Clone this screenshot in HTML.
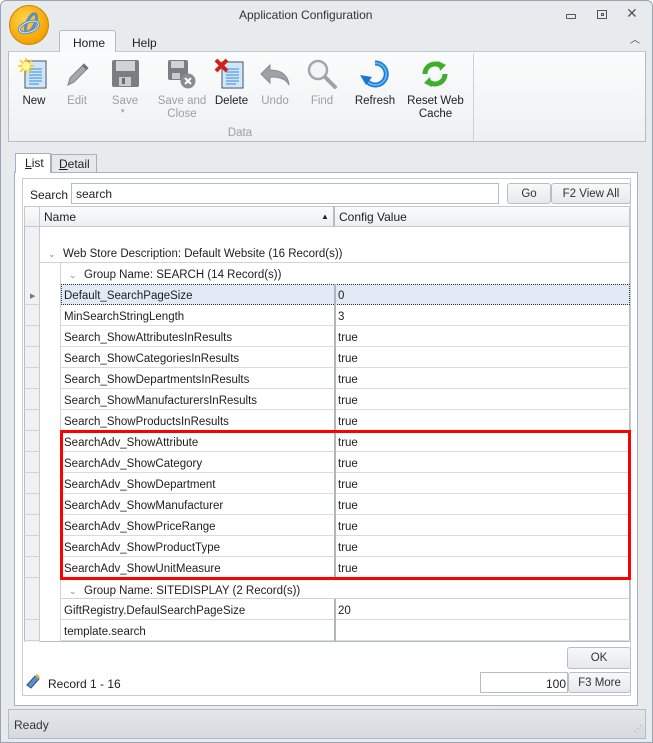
<!DOCTYPE html>
<html><head><style>
*{box-sizing:border-box;margin:0;padding:0}
body{width:653px;height:743px;background:#fff;font-family:"Liberation Sans",sans-serif;font-size:12px;color:#1e1e1e;position:relative;overflow:hidden}
.a{position:absolute}
.t{position:absolute;white-space:nowrap;line-height:14px}
.lbl{position:absolute;text-align:center;line-height:13px;font-size:11.5px;white-space:nowrap}
.dis{color:#9aa0a8}
.nm{position:absolute;left:24px;top:5px;font-size:11.5px;line-height:14px;white-space:nowrap}
.vl{position:absolute;left:298px;top:5px;font-size:11.5px;line-height:14px}
.btn{position:absolute;border:1px solid #b9bec6;border-radius:3px;background:linear-gradient(#f7f8f9,#e6e9ec);text-align:center;font-size:11.5px;line-height:19px;color:#333}
</style></head><body>
<div class="a" style="left:0;top:0;width:653px;height:743px;background:#e8ebee;border:1px solid #9ba3ad;border-radius:6px 6px 0 0"></div>
<div class="a" style="left:9px;top:5px;width:40px;height:40px;border-radius:50%;background:radial-gradient(circle at 40% 35%,#ffd44a,#f5a300 70%,#d88300);border:1px solid #c98300"></div>
<svg class="a" style="left:9px;top:5px" width="40" height="40" viewBox="0 0 40 40"><g fill="none" stroke="#5e8fc0" stroke-width="3"><ellipse cx="20" cy="22" rx="10" ry="5" transform="rotate(-20 20 22)"/><ellipse cx="22" cy="18" rx="4" ry="10" transform="rotate(25 22 18)"/></g><g fill="none" stroke="#dbe8f5" stroke-width="1"><ellipse cx="20" cy="22" rx="10" ry="5" transform="rotate(-20 20 22)"/></g></svg>
<div class="t" style="left:239px;top:8px;font-size:12px;color:#333">Application Configuration</div>
<div class="a" style="left:566px;top:14px;width:10px;height:5px;border:1px solid #555;border-radius:1px"></div>
<div class="a" style="left:597px;top:10px;width:10px;height:9px;border:1px solid #555"></div>
<div class="a" style="left:601px;top:13px;width:3px;height:3px;border:1px solid #555"></div>
<div class="t" style="left:626px;top:6px;font-size:14px;color:#555">✕</div>
<div class="t" style="left:630px;top:34px;font-size:10px;color:#444">︿</div>
<div class="a" style="left:59px;top:30px;width:57px;height:22px;background:#f8f9fa;border:1px solid #b5bcc5;border-bottom:none;border-radius:3px 3px 0 0"></div>
<div class="t" style="left:73px;top:36px">Home</div>
<div class="t" style="left:132px;top:36px">Help</div>
<div class="a" style="left:8px;top:51px;width:638px;height:91px;background:linear-gradient(#fbfcfc,#eef0f2);border:1px solid #b5bcc5;border-top-color:#c3c9d0"></div>
<div class="a" style="left:60px;top:51px;width:55px;height:2px;background:#f8f9fa"></div>
<div class="a" style="left:473px;top:53px;width:1px;height:88px;background:#cdd2d8"></div>
<svg class="a" style="left:18px;top:58px" width="32" height="32" viewBox="0 0 32 32"><rect x="7" y="3" width="21" height="27" fill="#e8f3ff" stroke="#3a4f66"/><rect x="8" y="4" width="19" height="25" fill="#cfe6fa"/><g stroke="#3b8ad6"><path d="M11 11h13M11 14h13M11 17h13M11 20h13M11 23h13M11 26h10"/></g><circle cx="8" cy="8" r="5" fill="#ffe64d"/><path d="M8 0v16M0 8h16M2 2l12 12M14 2L2 14" stroke="#ffc400" stroke-width="1.5"/><circle cx="8" cy="8" r="4" fill="#fff6a0"/></svg>
<svg class="a" style="left:63px;top:60px" width="28" height="28" viewBox="0 0 28 28"><path d="M5 25l2-7L21 4l4 4-14 14z" fill="#a5a9ad" stroke="#7d8186"/><path d="M20 5l4 4" stroke="#6a6e72" stroke-width="2"/></svg>
<svg class="a" style="left:111px;top:59px" width="29" height="29" viewBox="0 0 29 29"><rect x="1" y="1" width="27" height="27" rx="2" fill="#7a7e82"/><rect x="5" y="2" width="19" height="10" fill="#d0d3d6"/><rect x="8" y="18" width="12" height="9" fill="#c8cbce"/><rect x="11" y="19" width="3" height="6" fill="#6a6e72"/></svg>
<svg class="a" style="left:167px;top:59px" width="30" height="30" viewBox="0 0 30 30"><rect x="1" y="1" width="20" height="20" rx="2" fill="#7a7e82"/><rect x="4" y="2" width="13" height="7" fill="#d0d3d6"/><rect x="5" y="14" width="8" height="6" fill="#c8cbce"/><circle cx="21" cy="22" r="7.5" fill="#888c90"/><path d="M18 19l6 6M24 19l-6 6" stroke="#fff" stroke-width="2"/></svg>
<svg class="a" style="left:213px;top:57px" width="33" height="33" viewBox="0 0 33 33"><rect x="9" y="5" width="21" height="26" fill="#e8f3ff" stroke="#3a4f66"/><rect x="10" y="6" width="19" height="24" fill="#cfe6fa"/><g stroke="#3b8ad6"><path d="M13 12h13M13 15h13M13 18h13M13 21h13M13 24h13M13 27h10"/></g><path d="M3 3l11 11M14 3L3 14" stroke="#d0201c" stroke-width="4"/></svg>
<svg class="a" style="left:259px;top:62px" width="32" height="26" viewBox="0 0 32 26"><path d="M2 12l9-9v5c10 0 18 4 19 15-3-6-9-8-19-8v6z" fill="#9ea2a6" stroke="#888c90"/></svg>
<svg class="a" style="left:306px;top:58px" width="32" height="32" viewBox="0 0 32 32"><circle cx="12" cy="12" r="9" fill="#f3f4f5" stroke="#a3a7ab" stroke-width="2.5"/><path d="M19 19l10 10" stroke="#9ea2a6" stroke-width="4" stroke-linecap="round"/></svg>
<svg class="a" style="left:359px;top:58px" width="32" height="32" viewBox="0 0 32 32"><path d="M16 5a11 11 0 1 1-10 15" fill="none" stroke="#1a78d0" stroke-width="5"/><path d="M16 5a11 11 0 1 1-10 15" fill="none" stroke="#5cb3f5" stroke-width="2"/><path d="M1 17l6 10 6-8z" fill="#1a78d0"/></svg>
<svg class="a" style="left:419px;top:58px" width="32" height="32" viewBox="0 0 32 32"><path d="M6 16a10 10 0 0 1 16-8" fill="none" stroke="#3fae2a" stroke-width="5"/><path d="M19 3l8 4-6 6z" fill="#3fae2a"/><path d="M26 16a10 10 0 0 1-16 8" fill="none" stroke="#3fae2a" stroke-width="5"/><path d="M13 29l-8-4 6-6z" fill="#3fae2a"/></svg>
<div class="lbl" style="left:14px;top:95px;width:40px">New</div>
<div class="lbl dis" style="left:57px;top:95px;width:40px">Edit</div>
<div class="lbl dis" style="left:105px;top:95px;width:40px">Save</div>
<div class="t dis" style="left:121px;top:105px;font-size:7px">▾</div>
<div class="lbl dis" style="left:152px;top:95px;width:60px">Save and<br>Close</div>
<div class="lbl" style="left:209px;top:95px;width:45px">Delete</div>
<div class="lbl dis" style="left:255px;top:95px;width:40px">Undo</div>
<div class="lbl dis" style="left:302px;top:95px;width:40px">Find</div>
<div class="lbl" style="left:350px;top:95px;width:50px">Refresh</div>
<div class="lbl" style="left:403px;top:95px;width:65px">Reset Web<br>Cache</div>
<div class="lbl dis" style="left:220px;top:127px;width:40px">Data</div>
<div class="a" style="left:15px;top:153px;width:36px;height:20px;background:#fff;border:1px solid #a8b0ba;border-bottom:none"></div>
<div class="t" style="left:25px;top:156px"><u>L</u>ist</div>
<div class="a" style="left:51px;top:154px;width:46px;height:18px;background:#e6e9ec;border:1px solid #a8b0ba;border-bottom:none"></div>
<div class="t" style="left:59px;top:157px"><u>D</u>etail</div>
<div class="a" style="left:14px;top:172px;width:624px;height:534px;background:#fff;border:1px solid #a8b0ba"></div>
<div class="a" style="left:16px;top:171px;width:34px;height:2px;background:#fff"></div>
<div class="a" style="left:22px;top:178px;width:609px;height:518px;background:#fff;border:1px solid #c8cdd3"></div>
<div class="t" style="left:30px;top:188px">Search</div>
<div class="a" style="left:71px;top:183px;width:428px;height:21px;border:1px solid #b5bcc5"></div>
<div class="t" style="left:76px;top:187px">search</div>
<div class="btn" style="left:507px;top:183px;width:44px;height:21px;line-height:21px">Go</div>
<div class="btn" style="left:551px;top:183px;width:80px;height:21px;line-height:21px">F2 View All</div>
<div class="a" style="left:24px;top:206px;width:606px;height:436px;border:1px solid #b5bcc5;border-top:none;background:#fff"></div>
<div class="a" style="left:24px;top:206px;width:606px;height:21px;background:linear-gradient(#fafbfc,#eceef0);border:1px solid #c5cad0"></div>
<div class="a" style="left:39px;top:206px;width:1px;height:21px;background:#c5cad0"></div>
<div class="a" style="left:333px;top:206px;width:2px;height:21px;background:#b5bcc5"></div>
<div class="t" style="left:44px;top:210px">Name</div>
<div class="t" style="left:321px;top:210px;font-size:8px">▲</div>
<div class="t" style="left:339px;top:210px">Config Value</div>
<div class="a" style="left:24px;top:227px;width:16px;height:415px;background:#f0f1f3;border-right:1px solid #c5cad0;border-left:1px solid #b5bcc5"></div>
<div class="a" style="left:40px;top:262px;width:590px;height:1px;background:#d0d4d9"></div>
<div class="t" style="left:48px;top:247px;font-size:9px;color:#888">⌄</div>
<div class="t" style="left:63px;top:247px;font-size:11.5px">Web Store Description: Default Website (16 Record(s))</div>
<div class="t" style="left:69px;top:268px;font-size:9px;color:#888">⌄</div>
<div class="t" style="left:84px;top:268px;font-size:11.5px">Group Name: SEARCH (14 Record(s))</div>
<div class="a" style="left:60px;top:263px;width:1px;height:379px;background:#d0d4d9"></div>
<div class="a" style="left:61px;top:284px;width:569px;height:21px;background:#e2ebf5;border:1px dotted #333"></div>
<div id="rows"></div>
<div class="t" style="left:30px;top:290px;font-size:7px;color:#777">▶</div>
<script>
var d=[["Default_SearchPageSize","0"],["MinSearchStringLength","3"],["Search_ShowAttributesInResults","true"],["Search_ShowCategoriesInResults","true"],["Search_ShowDepartmentsInResults","true"],["Search_ShowManufacturersInResults","true"],["Search_ShowProductsInResults","true"],["SearchAdv_ShowAttribute","true"],["SearchAdv_ShowCategory","true"],["SearchAdv_ShowDepartment","true"],["SearchAdv_ShowManufacturer","true"],["SearchAdv_ShowPriceRange","true"],["SearchAdv_ShowProductType","true"],["SearchAdv_ShowUnitMeasure","true"]];
var h="";
function row(y,n,v,f){h+='<div class="a" style="left:61px;top:'+y+'px;width:569px;height:21px;'+(f?'':'border-bottom:1px solid #d8dbe0')+'"><div class="nm" style="left:3px">'+n+'</div><div class="a" style="left:273px;top:0;width:2px;height:21px;background:#b0b6be"></div><div class="vl" style="left:277px">'+v+'</div></div>';
h+='<div class="a" style="left:24px;top:'+(y+20)+'px;width:16px;height:1px;background:#d0d4d9"></div>';}
for(var i=0;i<d.length;i++)row(284+21*i,d[i][0],d[i][1],i==0);
h+='<div class="a" style="left:61px;top:598px;width:569px;height:1px;background:#d0d4d9"></div>';
h+='<div class="t" style="left:69px;top:584px;font-size:9px;color:#888">⌄</div><div class="t" style="left:84px;top:584px;font-size:11.5px">Group Name: SITEDISPLAY (2 Record(s))</div>';
row(599,"GiftRegistry.DefaulSearchPageSize","20");row(620,"template.search","");
h+='<div class="a" style="left:60px;top:430px;width:571px;height:150px;border:3px solid #f00"></div>';
document.getElementById("rows").innerHTML=h;
</script>
<div class="btn" style="left:567px;top:647px;width:64px;height:22px;line-height:20px">OK</div>
<svg class="a" style="left:25px;top:673px" width="16" height="16" viewBox="0 0 16 16"><path d="M2 12l8-9 4 3-8 9z" fill="#5a8fd0" stroke="#2a4f80"/><path d="M10 3l2-2 3 3-2 2" fill="#e0b030"/></svg>
<div class="t" style="left:48px;top:677px">Record 1 - 16</div>
<div class="a" style="left:480px;top:672px;width:88px;height:21px;border:1px solid #b5bcc5;background:#fff"></div>
<div class="t" style="left:546px;top:677px">100</div>
<div class="btn" style="left:568px;top:672px;width:63px;height:21px;line-height:21px">F3 More</div>
<div class="a" style="left:8px;top:709px;width:638px;height:30px;background:linear-gradient(#e4e7ea,#d6dadf);border:1px solid #b5bcc5"></div>
<div class="t" style="left:14px;top:718px;color:#333">Ready</div>
<div class="t" style="left:634px;top:722px;font-size:8px;color:#999;letter-spacing:-1px">⋰</div>
</body></html>
